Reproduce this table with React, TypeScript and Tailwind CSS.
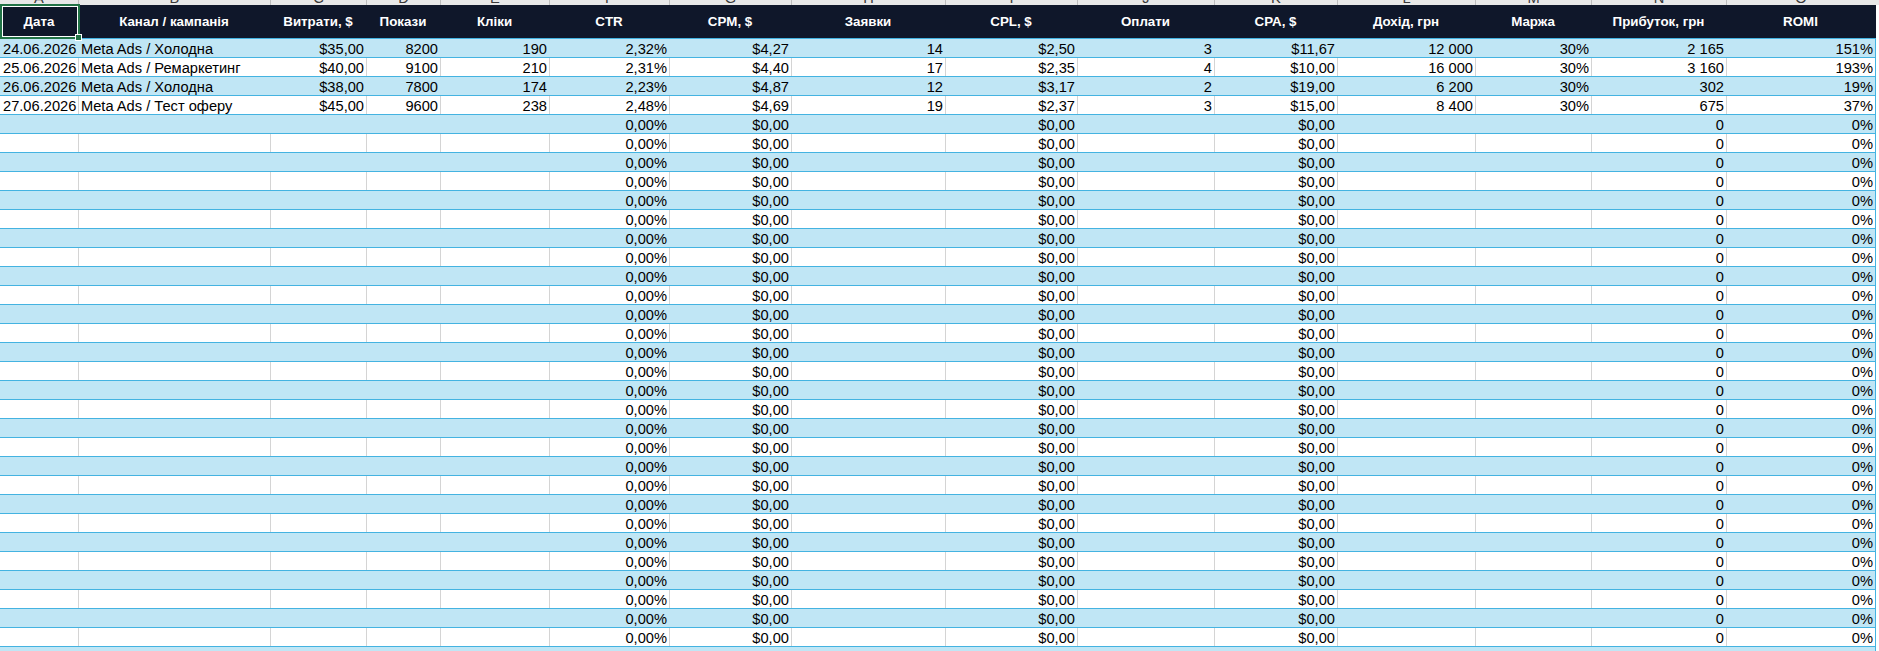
import React from "react";

const GRID =
  "grid grid-cols-[78px_192px_96px_74px_109px_120px_122px_154px_132px_137px_123px_138px_116px_135px_149px]";

const headers = [
  "Дата",
  "Канал / кампанія",
  "Витрати, $",
  "Покази",
  "Кліки",
  "CTR",
  "CPM, $",
  "Заявки",
  "CPL, $",
  "Оплати",
  "CPA, $",
  "Дохід, грн",
  "Маржа",
  "Прибуток, грн",
  "ROMI",
];

const letters = ["A", "B", "C", "D", "E", "F", "G", "H", "I", "J", "K", "L", "M", "N", "O"];

const data: string[][] = [
  ["24.06.2026", "Meta Ads / Холодна", "$35,00", "8200", "190", "2,32%", "$4,27", "14", "$2,50", "3", "$11,67", "12 000", "30%", "2 165", "151%"],
  ["25.06.2026", "Meta Ads / Ремаркетинг", "$40,00", "9100", "210", "2,31%", "$4,40", "17", "$2,35", "4", "$10,00", "16 000", "30%", "3 160", "193%"],
  ["26.06.2026", "Meta Ads / Холодна", "$38,00", "7800", "174", "2,23%", "$4,87", "12", "$3,17", "2", "$19,00", "6 200", "30%", "302", "19%"],
  ["27.06.2026", "Meta Ads / Тест оферу", "$45,00", "9600", "238", "2,48%", "$4,69", "19", "$2,37", "3", "$15,00", "8 400", "30%", "675", "37%"],
];

const emptyRow = ["", "", "", "", "", "0,00%", "$0,00", "", "$0,00", "", "$0,00", "", "", "0", "0%"];

const rows: string[][] = [...data];
while (rows.length < 33) rows.push(emptyRow);

export default function App() {
  return (
    <div
      className="relative h-[651px] w-full overflow-hidden bg-white text-black"
      style={{ fontFamily: '"Liberation Sans", Arial, sans-serif' }}
    >
      {/* column letter strip (cut off) */}
      <div className="h-[5px] w-full overflow-hidden bg-[#e8e8e8]">
        <div className={`${GRID} h-[5px] w-[1876px]`}>
          {letters.map((l, i) => (
            <div
              key={l}
              className={`h-[5px] overflow-hidden text-center text-[14.67px] leading-[16px] text-[#3a3a3a] ${
                i === 0 ? "" : "border-l border-[#bdbdbd]"
              }`}
            >
              <div className="-mt-[10px]">{l}</div>
            </div>
          ))}
        </div>
      </div>

      {/* header */}
      <div className={`${GRID} h-[33px] w-[1876px] bg-[#0f172a]`}>
        {headers.map((h) => (
          <div
            key={h}
            className="flex h-[33px] items-center justify-center whitespace-nowrap text-[13.33px] font-bold text-white"
          >
            {h}
          </div>
        ))}
      </div>

      {/* body */}
      {rows.map((r, ri) => {
        const blue = ri % 2 === 0;
        const isData = ri < data.length;
        return (
          <div
            key={ri}
            className={`${GRID} h-[19px] w-[1876px] border-t border-r border-[#44b3e1] ${
              blue ? "bg-[#c0e6f5]" : "bg-white"
            }`}
          >
            {r.map((c, ci) => {
              const left = ci <= 1;
              const hideBorder = blue || ci === 0 || (isData && ci === 2);
              return (
                <div
                  key={ci}
                  className={`h-[18px] overflow-hidden whitespace-nowrap pt-[2px] text-[14.67px] leading-[16px] ${
                    ci === 0 ? "pl-[3px]" : "border-l pl-[2px]"
                  } pr-[2px] ${left ? "text-left" : "text-right"} ${
                    hideBorder ? "border-transparent" : "border-[#d4d4d4]"
                  }`}
                >
                  {c}
                </div>
              );
            })}
          </div>
        );
      })}

      {/* selected cell frame */}
      <div className="pointer-events-none absolute left-0 top-[4px] h-[35px] w-[80px] border-2 border-[#217346]">
        <div className="h-full w-full border border-white" />
      </div>
      <div className="pointer-events-none absolute left-[75px] top-[34px] h-[7px] w-[7px] border border-white bg-[#217346]" />
    </div>
  );
}
